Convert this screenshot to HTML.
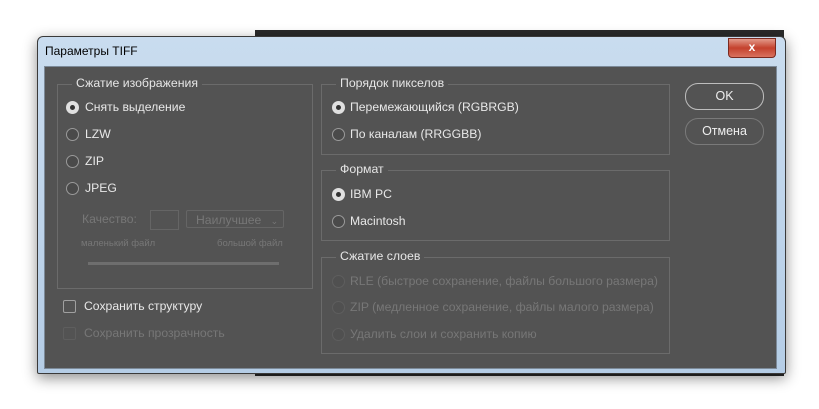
<html><head><style>
body{margin:0;width:819px;height:409px;background:#fff;position:relative;overflow:hidden;font-family:"Liberation Sans","DejaVu Sans",sans-serif}
.a{position:absolute}
.win{left:37px;top:36px;width:747px;height:336px;background:linear-gradient(#c9dcef,#b5cde6);border:1px solid #3a3a3a;border-radius:6px 6px 2px 2px;box-shadow:0 4px 14px rgba(0,0,0,.45)}
.cont{left:44px;top:66px;width:731px;height:301px;background:#535353;border:1px solid #7c8a99}
.g{position:absolute;border:1px solid #6b6b6b}
.gt{position:absolute;top:-9px;left:14px;background:#535353;padding:0 4px;color:#e6e6e6;font-size:12.3px}
.t{position:absolute;color:#e8e8e8;font-size:12.2px;white-space:nowrap}
.d{color:#777}
.r{position:absolute;width:11px;height:11px;border-radius:50%;border:1px solid #9a9a9a;background:#4a4a4a}
.r.on{background:#e0e0e0;border-color:#e0e0e0}
.r.on:after{content:"";position:absolute;left:3px;top:3px;width:5px;height:5px;border-radius:50%;background:#333}
.r.dis{border-color:#5e5e5e;background:#505050}
.btn{position:absolute;width:77px;height:25px;border:1px solid #bdbdbd;border-radius:13px;color:#eee;font-size:12.5px;text-align:center;line-height:25px}
</style></head><body>
<div class="a" style="left:255px;top:30px;width:529px;height:8px;background:#2a2a2a"></div>
<div class="a" style="left:255px;top:370px;width:529px;height:6px;background:#2a2a2a"></div>
<div class="a win"></div>
<div class="t" style="left:45px;top:44px;color:#000;font-size:12px">Параметры TIFF</div>
<div class="a" style="left:728px;top:38px;width:46px;height:18px;background:linear-gradient(#e39a8a,#c4412d 50%,#d9725f);border:1px solid #7a2a20;border-radius:0 0 4px 4px;color:#fff;font-weight:bold;text-align:center;font-size:12px;line-height:17px">x</div>
<div class="a cont"></div>

<div class="g" style="left:57px;top:84px;width:254px;height:203px"><div class="gt">Сжатие изображения</div></div>
<div class="g" style="left:321px;top:84px;width:347px;height:69px"><div class="gt">Порядок пикселов</div></div>
<div class="g" style="left:321px;top:170px;width:347px;height:69px"><div class="gt">Формат</div></div>
<div class="g" style="left:321px;top:257px;width:347px;height:95px"><div class="gt">Сжатие слоев</div></div>

<div class="r on" style="left:66px;top:101px"></div><div class="t" style="left:85px;top:100px">Снять выделение</div>
<div class="r" style="left:66px;top:128px"></div><div class="t" style="left:85px;top:127px">LZW</div>
<div class="r" style="left:66px;top:155px"></div><div class="t" style="left:85px;top:154px">ZIP</div>
<div class="r" style="left:66px;top:182px"></div><div class="t" style="left:85px;top:181px">JPEG</div>
<div class="t d" style="left:82px;top:212px">Качество:</div>
<div class="a" style="left:150px;top:210px;width:27px;height:18px;border:1px solid #656565"></div>
<div class="a" style="left:186px;top:210px;height:18px;border:1px solid #656565;border-radius:2px;color:#777;font-size:12.2px;line-height:18px;padding-left:9px;box-sizing:border-box;width:98px">Наилучшее <span style="font-size:9px;margin-left:6px">⌄</span></div>
<div class="t d" style="left:81px;top:238px;font-size:9.5px">маленький файл</div>
<div class="t d" style="left:217px;top:238px;font-size:9.5px">большой файл</div>
<div class="a" style="left:88px;top:262px;width:191px;height:3px;background:#6e6e6e"></div>

<div class="a" style="left:63px;top:300px;width:11px;height:11px;border:1px solid #a0a0a0;border-radius:2px"></div><div class="t" style="left:84px;top:299px">Сохранить структуру</div>
<div class="a" style="left:63px;top:327px;width:11px;height:11px;border:1px solid #5e5e5e;border-radius:2px"></div><div class="t d" style="left:84px;top:326px">Сохранить прозрачность</div>

<div class="r on" style="left:332px;top:101px"></div><div class="t" style="left:350px;top:100px">Перемежающийся (RGBRGB)</div>
<div class="r" style="left:332px;top:128px"></div><div class="t" style="left:350px;top:127px">По каналам (RRGGBB)</div>
<div class="r on" style="left:332px;top:188px"></div><div class="t" style="left:350px;top:187px">IBM PC</div>
<div class="r" style="left:332px;top:215px"></div><div class="t" style="left:350px;top:214px">Macintosh</div>
<div class="r dis" style="left:332px;top:275px"></div><div class="t d" style="left:350px;top:274px">RLE (быстрое сохранение, файлы большого размера)</div>
<div class="r dis" style="left:332px;top:301px"></div><div class="t d" style="left:350px;top:300px">ZIP (медленное сохранение, файлы малого размера)</div>
<div class="r dis" style="left:332px;top:328px"></div><div class="t d" style="left:350px;top:327px">Удалить слои и сохранить копию</div>

<div class="btn" style="left:685px;top:83px">OK</div>
<div class="btn" style="left:685px;top:118px;border-color:#7a7a7a">Отмена</div>
</body></html>
